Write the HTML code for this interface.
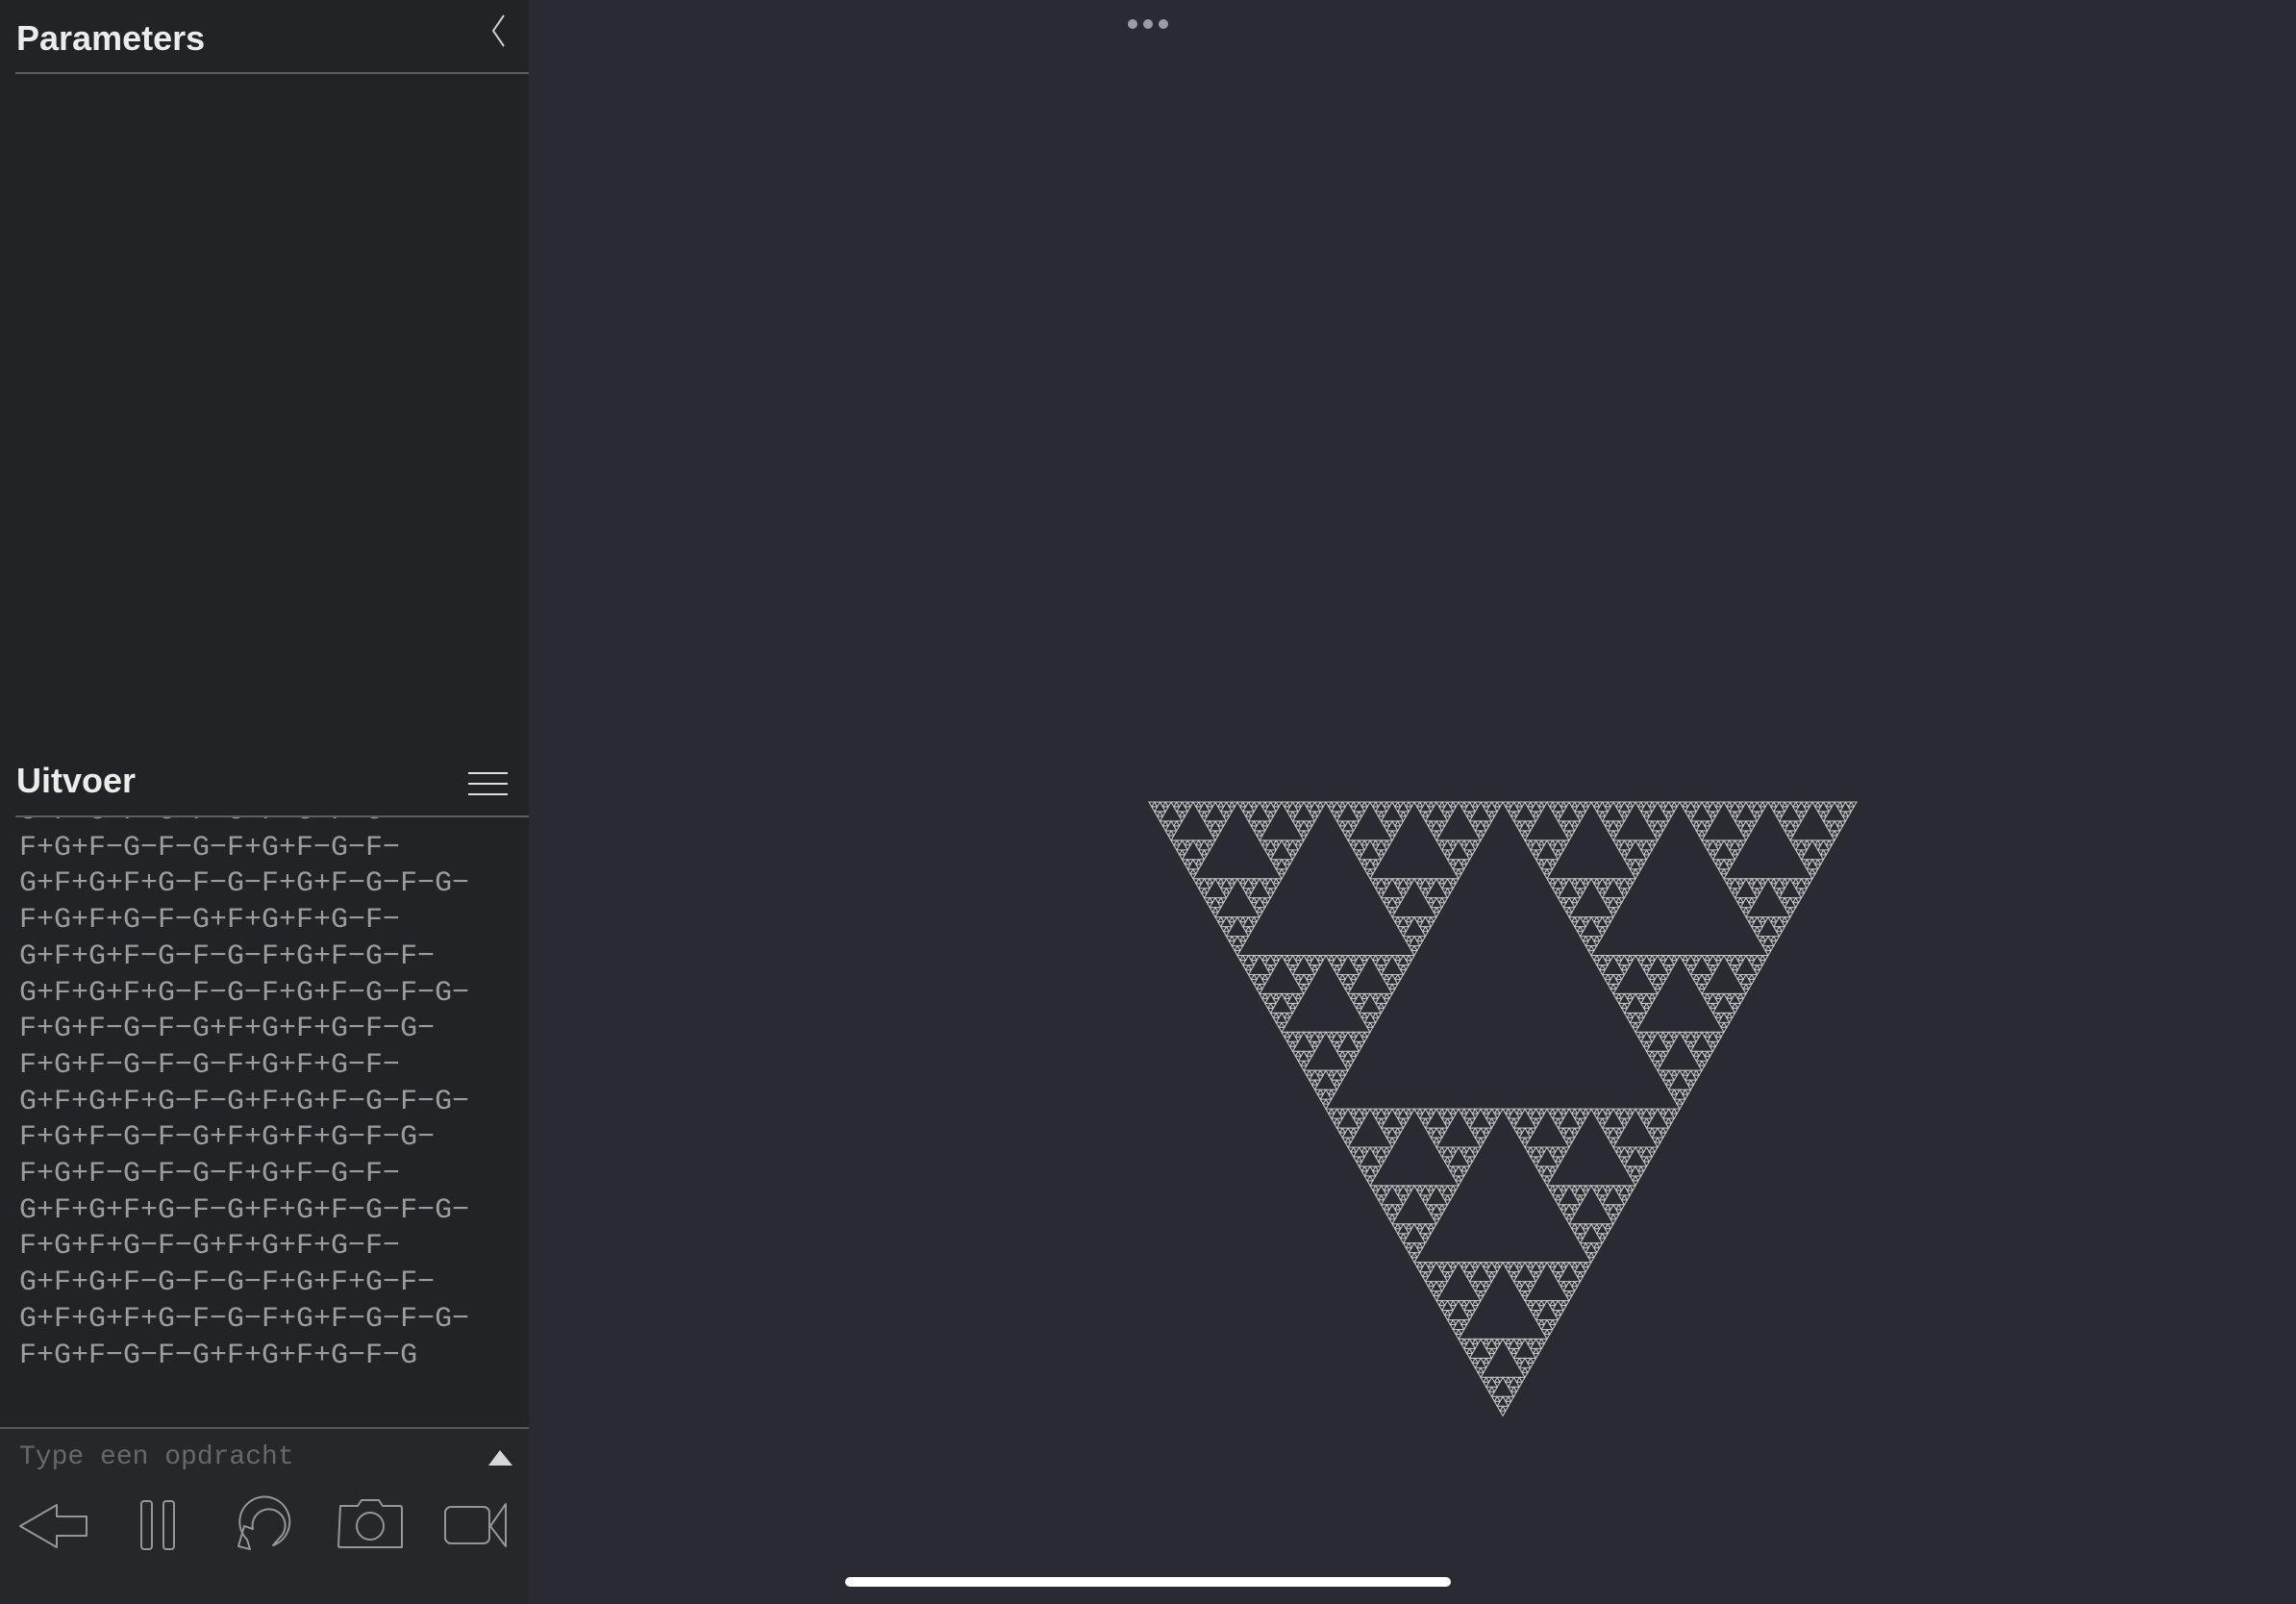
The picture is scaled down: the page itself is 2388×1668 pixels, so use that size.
<!DOCTYPE html>
<html><head><meta charset="utf-8"><style>
html,body{margin:0;padding:0;width:2388px;height:1668px;overflow:hidden;background:#2a2a32;font-family:"Liberation Sans",sans-serif}
#wrap{position:relative;width:2388px;height:1668px;overflow:hidden}
#panel{position:absolute;left:0;top:0;width:550px;height:1668px;background:#222327}
#bottom{position:absolute;left:0;top:1484px;width:550px;height:184px;background:#25282b;border-top:2px solid #58595c}
.title{position:absolute;left:17px;color:#ececec;font-weight:bold;font-size:36px}
.hr{position:absolute;left:16px;width:534px;height:2px;background:#5c5d60}
#out{position:absolute;left:20px;top:826px;width:530px;height:640px;overflow:hidden;clip-path:inset(14px 0 0 0);font-family:"Liberation Mono",monospace;font-size:30px;line-height:37.7px;color:#9c9c9c;white-space:pre}
#ph{position:absolute;left:20px;top:14px;font-family:"Liberation Mono",monospace;font-size:28px;color:#67686a}
</style></head><body><div id="wrap">
<div id="panel">
<div class="title" style="top:19px">Parameters</div>
<svg style="position:absolute;left:505px;top:12px" width="24" height="40"><polyline points="19,4 8,20 19,36" fill="none" stroke="#ccc" stroke-width="2"/></svg>
<div class="hr" style="top:75px"></div>
<div id="out">G+F+G+F−G−F+G+F+G−F−G−
F+G+F−G−F−G−F+G+F−G−F−
G+F+G+F+G−F−G−F+G+F−G−F−G−
F+G+F+G−F−G+F+G+F+G−F−
G+F+G+F−G−F−G−F+G+F−G−F−
G+F+G+F+G−F−G−F+G+F−G−F−G−
F+G+F−G−F−G+F+G+F+G−F−G−
F+G+F−G−F−G−F+G+F+G−F−
G+F+G+F+G−F−G+F+G+F−G−F−G−
F+G+F−G−F−G+F+G+F+G−F−G−
F+G+F−G−F−G−F+G+F−G−F−
G+F+G+F+G−F−G+F+G+F−G−F−G−
F+G+F+G−F−G+F+G+F+G−F−
G+F+G+F−G−F−G−F+G+F+G−F−
G+F+G+F+G−F−G−F+G+F−G−F−G−
F+G+F−G−F−G+F+G+F+G−F−G</div>
<div style="position:absolute;left:0;top:770px;width:550px;height:78px;background:#222327"></div>
<div class="title" style="top:791px">Uitvoer</div>
<svg style="position:absolute;left:486px;top:798px" width="44" height="32"><g stroke="#ddd" stroke-width="2"><line x1="1" y1="6" x2="42" y2="6"/><line x1="1" y1="17" x2="42" y2="17"/><line x1="1" y1="28" x2="42" y2="28"/></g></svg>
<div class="hr" style="top:848px"></div>
</div>
<div id="bottom">
<div id="ph">Type een opdracht</div>
<svg style="position:absolute;left:507px;top:20px" width="28" height="20"><polygon points="13,2 26,18 1,18" fill="#d8d8d8"/></svg>
<svg style="position:absolute;left:0;top:-9px" width="550" height="184" fill="none" stroke="#969696" stroke-width="2" stroke-linejoin="round">
<path d="M21,110 L59,88 L59,100 L90,100 L90,120 L59,120 L59,132 Z"/>
<rect x="147" y="84" width="11" height="50" rx="3"/><rect x="170" y="84" width="11" height="50" rx="3"/>
<g transform="translate(-8,0)"><path d="M256,131 L268,134 L265,124 A26,26 0 1 1 292,130 L299,122 A17,17 0 1 0 271,113 L262,110 Z"/></g>
<path d="M354,89 L372,89 L376,83 L394,83 L398,89 L416,89 Q418,89 418,92 L418,132 L354,132 Q352,132 352,130 Z"/>
<circle cx="385" cy="110" r="14"/>
<rect x="463" y="90" width="46" height="38" rx="6"/><path d="M526,87 L526,131 L510,110 Z"/>
</svg>
</div>
<svg style="position:absolute;left:1168px;top:16px" width="52" height="18"><g fill="#9c9ca8"><circle cx="10" cy="9" r="5"/><circle cx="26" cy="9" r="5"/><circle cx="42" cy="9" r="5"/></g></svg>
<svg style="position:absolute;left:0;top:0" width="2388" height="1668">
<defs>
<polygon id="L0" points="0,0 1,0 0.5,0.866" fill="none" stroke="#c4c4c4" stroke-width="1.1" vector-effect="non-scaling-stroke"/>
<g id="L1"><use href="#L0" transform="scale(.5)"/><use href="#L0" transform="translate(.5,0) scale(.5)"/><use href="#L0" transform="translate(.25,.433) scale(.5)"/></g>
<g id="L2"><use href="#L1" transform="scale(.5)"/><use href="#L1" transform="translate(.5,0) scale(.5)"/><use href="#L1" transform="translate(.25,.433) scale(.5)"/></g>
<g id="L3"><use href="#L2" transform="scale(.5)"/><use href="#L2" transform="translate(.5,0) scale(.5)"/><use href="#L2" transform="translate(.25,.433) scale(.5)"/></g>
<g id="L4"><use href="#L3" transform="scale(.5)"/><use href="#L3" transform="translate(.5,0) scale(.5)"/><use href="#L3" transform="translate(.25,.433) scale(.5)"/></g>
<g id="L5"><use href="#L4" transform="scale(.5)"/><use href="#L4" transform="translate(.5,0) scale(.5)"/><use href="#L4" transform="translate(.25,.433) scale(.5)"/></g>
<g id="L6"><use href="#L5" transform="scale(.5)"/><use href="#L5" transform="translate(.5,0) scale(.5)"/><use href="#L5" transform="translate(.25,.433) scale(.5)"/></g>
<g id="L7"><use href="#L6" transform="scale(.5)"/><use href="#L6" transform="translate(.5,0) scale(.5)"/><use href="#L6" transform="translate(.25,.433) scale(.5)"/></g>
</defs>
<use href="#L7" transform="translate(1195,834) scale(736,737)"/>
<rect x="879" y="1640" width="630" height="10" rx="5" fill="#ffffff"/>
</svg>
</div></body></html>
